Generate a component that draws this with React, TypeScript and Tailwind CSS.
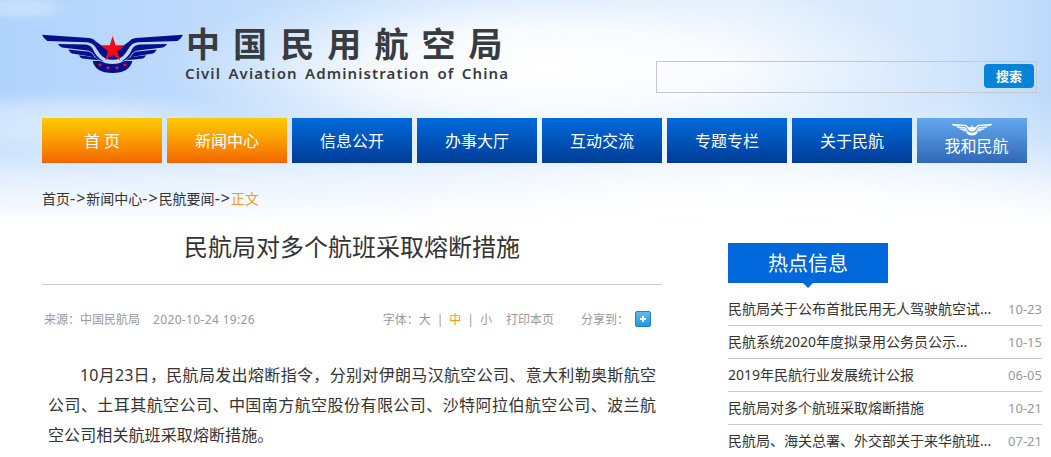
import clsx from 'clsx';

const navItems = [
  { label: '首 页', active: true },
  { label: '新闻中心', active: true },
  { label: '信息公开', active: false },
  { label: '办事大厅', active: false },
  { label: '互动交流', active: false },
  { label: '专题专栏', active: false },
  { label: '关于民航', active: false },
];

const hotNews = [
  { title: '民航局关于公布首批民用无人驾驶航空试...', date: '10-23' },
  { title: '民航系统2020年度拟录用公务员公示...', date: '10-15' },
  { title: '2019年民航行业发展统计公报', date: '06-05' },
  { title: '民航局对多个航班采取熔断措施', date: '10-21' },
  { title: '民航局、海关总署、外交部关于来华航班...', date: '07-21' },
];

const Wing = () => (
  <>
    <path d="M36 58 L178 68 Q190 69 198 79 L216 92 L232 98 L248 100 L248 134 Q222 134 209 115 L195 94 Q186 82 171 81 L52 77 Q41 70 36 58 Z" />
    <path d="M84 86 L166 88 Q181 89 188 101 Q199 128 222 139 Q204 136 193 121 Q185 108 171 106 L96 97 Q88 94 84 86 Z" />
    <path d="M115 103 L172 109 Q184 110 190 120 Q194 126 199 129 Q190 126 182 124 L126 115 Q118 111 115 103 Z" />
    <path d="M147 120 L184 125 Q198 126 208 136 Q200 134 190 134 L156 130 Q150 127 147 120 Z" />
  </>
);

const starPoints = '0,-10 2.3,-3.1 9.5,-3.1 3.7,1.2 5.9,8.1 0,3.9 -5.9,8.1 -3.7,1.2 -9.5,-3.1 -2.3,-3.1';

const Emblem = ({ className, mono = false }: { className?: string; mono?: boolean }) => (
  <svg viewBox="30 50 435 130" preserveAspectRatio="none" className={className}>
    <g fill={mono ? '#fff' : '#06108a'}>
      <Wing />
      <g transform="translate(495 0) scale(-1 1)">
        <Wing />
      </g>
      <path d="M188 138 L212 138 Q226 147 247 147 Q269 147 283 138 L307 138 Q299 174 247 174 Q196 174 188 138 Z" />
    </g>
    <polygon points={starPoints} transform="translate(248 103) scale(3.8 4.1)" fill={mono ? '#fff' : '#fb0712'} />
    {!mono && (
      <g fill="#e51a2b">
        <polygon points={starPoints} transform="translate(210 149) scale(.75)" />
        <polygon points={starPoints} transform="translate(234 158) scale(.75)" />
        <polygon points={starPoints} transform="translate(261 158) scale(.75)" />
        <polygon points={starPoints} transform="translate(285 149) scale(.75)" />
      </g>
    )}
  </svg>
);

const Sky = () => (
  <svg className="absolute left-0 top-0 h-[240px] w-[1051px]" viewBox="0 0 1051 240" aria-hidden="true">
    <defs>
      <linearGradient id="skyBase" x1="0" y1="0" x2="1" y2="0">
        <stop offset="0" stopColor="#b0d3fc" />
        <stop offset=".2" stopColor="#bedbfc" />
        <stop offset=".45" stopColor="#d3e7fd" />
        <stop offset=".7" stopColor="#e2effd" />
        <stop offset=".9" stopColor="#d3e6fc" />
        <stop offset="1" stopColor="#bddafb" />
      </linearGradient>
      <radialGradient id="glow">
        <stop offset="0" stopColor="#fff" />
        <stop offset=".45" stopColor="#fff" stopOpacity=".8" />
        <stop offset=".75" stopColor="#fff" stopOpacity=".28" />
        <stop offset="1" stopColor="#fff" stopOpacity="0" />
      </radialGradient>
      <linearGradient id="fade" x1="0" y1="0" x2="0" y2="1">
        <stop offset="0" stopColor="#fff" stopOpacity="0" />
        <stop offset=".35" stopColor="#fff" stopOpacity=".25" />
        <stop offset=".65" stopColor="#fff" stopOpacity=".65" />
        <stop offset="1" stopColor="#fff" />
      </linearGradient>
    </defs>
    <rect width="1051" height="240" fill="url(#skyBase)" />
    <ellipse cx="550" cy="68" rx="390" ry="90" fill="url(#glow)" />
    <ellipse cx="20" cy="8" rx="55" ry="14" fill="url(#glow)" opacity=".3" />
    <ellipse cx="60" cy="122" rx="190" ry="34" fill="url(#glow)" opacity=".4" />
    <ellipse cx="760" cy="235" rx="420" ry="80" fill="url(#glow)" />
    <rect y="95" width="1051" height="130" fill="url(#fade)" />
    <rect y="225" width="1051" height="15" fill="#fff" />
  </svg>
);

const SiteHeader = () => (
  <header className="relative flex justify-between">
    <div className="flex pl-10 pt-[31px]">
      <Emblem className="mt-px h-[43px] w-[145px]" />
      <div className="-mt-[7px] text-[#383b40]">
        <div className="h-[41px] whitespace-nowrap text-[34px] font-bold leading-[41px] tracking-[13.1px]">
          <span className="ml-px">中国民用航空局</span>
        </div>
        <div className="h-4 whitespace-nowrap font-['Noto_Sans'] text-[15px] font-semibold leading-4 tracking-[1.1px] [word-spacing:2.4px]">
          Civil Aviation Administration of China
        </div>
      </div>
    </div>
    <div className="mr-[14px] mt-[61px] flex h-8 w-[381px] border border-[#c3c8d0]">
      <input className="min-w-0 flex-1 bg-transparent px-2 text-sm outline-none" />
      <button className="mr-0.5 mt-0.5 h-6 w-[50px] rounded-sm bg-[#0784d8] text-[13px] font-bold leading-6 text-white">
        搜索
      </button>
    </div>
  </header>
);

const NavBar = () => (
  <nav className="relative mt-[25px] flex gap-[5px] pl-[42px] text-base text-white">
    {navItems.map((item) => (
      <a
        key={item.label}
        className={clsx(
          'h-[45px] w-[120px] bg-linear-to-b text-center leading-[47px]',
          item.active ? 'from-[#fdcb00] to-[#f26500]' : 'from-[#006bdc] to-[#003c97]'
        )}
      >
        {item.label}
      </a>
    ))}
    <a className="flex h-[45px] w-[110px] flex-col items-center bg-linear-to-b from-[#65a8ef] to-[#3068b7] pt-[5px]">
      <Emblem mono className="h-[13px] w-[42px]" />
      <span className="ml-[9px] leading-[21px]">我和民航</span>
    </a>
  </nav>
);

const Article = () => (
  <main className="w-[620px]">
    <h1 className="h-[57px] border-b border-[#c9c9c9] pl-[142px] text-2xl leading-[38px] text-[#333]">
      民航局对多个航班采取熔断措施
    </h1>
    <div className="mt-[25px] flex h-5 items-center whitespace-nowrap pl-0.5 text-xs text-[#999]">
      <span>来源：中国民航局</span>
      <span className="ml-[13px] tracking-[0.35px]">2020-10-24 19:26</span>
      <div className="ml-auto flex items-center">
        <span>字体：</span>
        <span>大</span>
        <span className="mx-[6px]">|</span>
        <span className="text-[#f39a1c]">中</span>
        <span className="mx-[6px]">|</span>
        <span>小</span>
        <span className="ml-[14px]">打印本页</span>
        <span className="ml-[27px]">分享到：</span>
        <svg viewBox="0 0 16 16" className="mb-0.5 ml-[6px] mr-[11px] h-4 w-4">
          <defs>
            <linearGradient id="share" x1="0" y1="0" x2="0" y2="1">
              <stop offset="0" stopColor="#62bcec" />
              <stop offset="1" stopColor="#1c98dc" />
            </linearGradient>
          </defs>
          <rect x=".5" y=".5" width="15" height="15" rx="1.5" fill="url(#share)" stroke="#2583b8" />
          <path d="M8 5v6M5 8h6" stroke="#fff" strokeWidth="2" />
        </svg>
      </div>
    </div>
    <div className="ml-[6px] mt-[30px] w-[608px] text-base leading-[30px] text-[#333]">
      <p className="whitespace-nowrap pl-8 [text-align-last:justify]">
        10月23日，民航局发出熔断指令，分别对伊朗马汉航空公司、意大利勒奥斯航空
      </p>
      <p className="whitespace-nowrap [text-align-last:justify]">
        公司、土耳其航空公司、中国南方航空股份有限公司、沙特阿拉伯航空公司、波兰航
      </p>
      <p className="tracking-[0.1px]">空公司相关航班采取熔断措施。</p>
    </div>
  </main>
);

const HotNews = () => (
  <aside className="ml-[66px] mt-[15px] w-[314px]">
    <h2 className="relative h-10 w-40 bg-[#0068db] text-center text-xl leading-[42px] text-white">
      热点信息
      <span className="absolute left-[75px] top-10 border-x-[5px] border-t-[5px] border-x-transparent border-t-[#0068db]" />
    </h2>
    <ul className="mt-[10px]">
      {hotNews.map((item) => (
        <li
          key={item.title}
          className="flex h-[33px] justify-between whitespace-nowrap border-b border-[#c9c9c9] text-sm leading-[31px] text-[#333]"
        >
          <span>{item.title}</span>
          <span className="text-[13px] leading-[33px] text-[#999]">{item.date}</span>
        </li>
      ))}
    </ul>
  </aside>
);

const Arrow = () => <span className="text-[16px] leading-none tracking-[1px]">-&gt;</span>;

const App = () => {
  return (
    <div className="relative h-[457px] w-[1051px] overflow-hidden bg-white font-['Noto_Sans','Noto_Sans_CJK_SC',sans-serif]">
      <Sky />
      <SiteHeader />
      <NavBar />
      {/* Breadcrumb */}
      <div className="relative mt-[25px] h-[22px] pl-[42px] text-sm leading-[22px] text-[#333]">
        首页
        <Arrow />
        新闻中心
        <Arrow />
        民航要闻
        <Arrow />
        <span className="text-[#f39a1c]">正文</span>
      </div>
      <div className="relative mt-[18px] flex pl-[42px]">
        <Article />
        <HotNews />
      </div>
    </div>
  );
};

export default App;
